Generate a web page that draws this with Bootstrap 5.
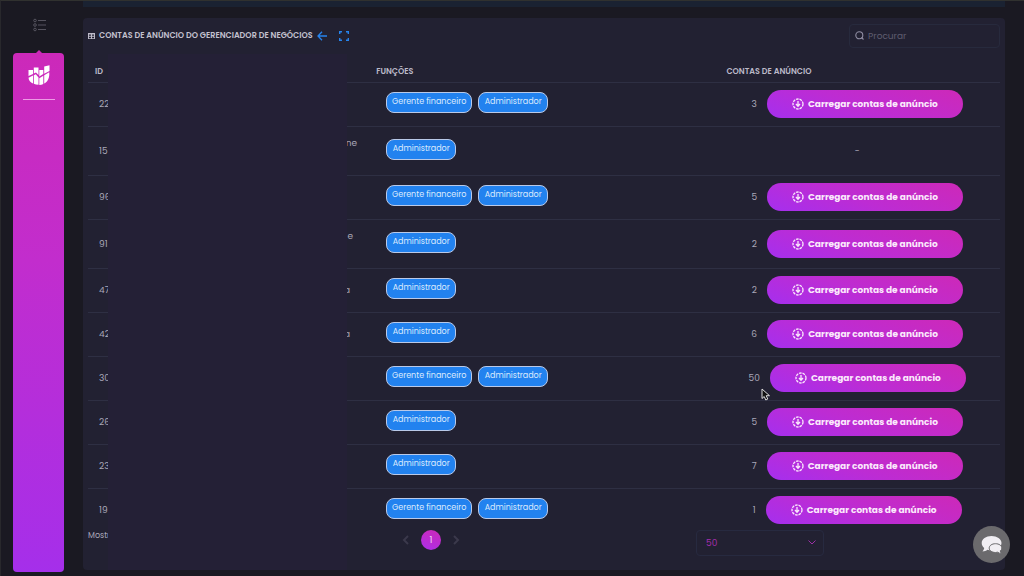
<!DOCTYPE html>
<html lang="pt-BR">
<head>
<meta charset="utf-8">
<meta name="viewport" content="width=device-width, initial-scale=1">
<title>Contas de anúncio</title>
<link href="https://cdn.jsdelivr.net/npm/bootstrap@5.3.0/dist/css/bootstrap.min.css" rel="stylesheet">
<style>
body{background:#1a1922;color:#aaa7b8;font-family:Poppins,Inter,"Open Sans",sans-serif;font-size:9px;line-height:14px;border-top:1px solid #30312f;border-left:1px solid #28282c}
.shell{min-height:calc(100vh - 1px)}
.rail{width:82px;padding:17px 19px 4px 12px}
.rail-toggle{color:#55535e;height:14px;margin-left:20px;line-height:0}
.rail-panel{background:linear-gradient(#cc29b9,#c22dcd 40%,#a52fea);border-radius:4px;margin-top:21px;position:relative}
.rail-panel::before{content:"";position:absolute;top:-3px;left:23px;border:solid transparent;border-width:0 3px 3px;border-bottom-color:#cc29b9}
.rail-line{width:32px;border-top:1px solid #ee9ce5;margin-top:14px}
.top-strip{height:6px;background:#1a2232}
.main-area{padding-right:19px;padding-bottom:6px}
.panel{background:#222132;border-radius:4px;margin-top:11px;padding:5px 5px 0}
.panel-head{height:25px}
.panel-title{font-size:8px;line-height:14px;font-weight:600;color:#c4c2d0}
.tool{color:#2684ee;line-height:0}
.search-box{width:151px;height:24px;border:1px solid #272a3d;border-radius:4px;padding:0 5px}
.search-box input{font-size:9px;color:#b4b1c2;min-width:0;outline:0}
.search-box input::placeholder{color:#5f5d70;opacity:1}
.accounts{table-layout:fixed;width:100%;margin-top:12px}
.accounts th{height:22px;padding:2px 0 0;font-size:8px;font-weight:600;color:#bcbac9;white-space:nowrap;vertical-align:middle}
.accounts td{height:44px;padding:0;vertical-align:middle}
.accounts tbody tr{border-top:1px solid #2e2f43}
.accounts .tall td{height:49px}
.accounts .c-id{padding-left:11px;white-space:nowrap}
.accounts th.c-id{padding-left:7px}
.accounts .c-name{padding-right:16px;text-align:right}
.accounts .tall .c-name{vertical-align:top;padding:9px 9px 0 0}
.accounts td.c-role{padding:0 0 3px 20px}
.accounts td.c-acc{padding-right:2px}
.accounts th.c-role,.accounts th.c-acc{padding-left:10px}
.load-group{gap:10px}
.role{display:inline-block;width:70px;height:21px;line-height:18px;border:1px solid #b9c9e8;border-radius:8px;background:#2282ef;color:#dceafd;font-size:8px;text-align:center;white-space:nowrap;margin-right:6px}
.role-wide{width:86px}
.load-btn{width:196px;height:28px;border:0;border-radius:14px;background:linear-gradient(20deg,#a52fee,#bd2cd3 45%,#cd29b8);color:#fbe9fc;font-size:9px;font-weight:700;padding:0;white-space:nowrap}
.cover{position:absolute;top:36px;bottom:0;left:25px;width:239px;background:#242036}
.panel-foot{height:40px;margin-top:-3px}
.shown{width:34.3%;font-size:8px}
.pager{height:22px;gap:10px}
.page-now{width:20px;height:20px;border:0;padding:0;border-radius:50%;background:linear-gradient(20deg,#ab2fea,#cd29b8);color:#f2d9f5;font-size:9px}
.page-step{border:0;background:none;padding:0;color:#3b394b;line-height:0}
.size-box{width:128px;height:26px;margin-top:1px;margin-right:176px;position:relative}
.size-box select{appearance:none;width:100%;height:100%;border:1px solid #272a40;border-radius:4px;background:transparent;color:#a52eae;font-size:9px;padding:0 9px}
.size-box svg{position:absolute;right:8px;top:9px;pointer-events:none}
.chat{position:fixed;right:14px;bottom:13px;width:37px;height:37px;border:0;border-radius:50%;background:#6b6a6d;padding:0;line-height:0}
.pointer{position:absolute;left:678px;top:370px}
</style>
</head>
<body>
<svg width="0" height="0" class="position-absolute" aria-hidden="true">
<symbol id="load" viewBox="0 0 12 12"><circle cx="6" cy="6" r="5" fill="none" stroke="currentColor" stroke-width="1.3" stroke-dasharray="2.6 .9"/><path d="M6 3v5M4 6l2 2.300L8 6" fill="none" stroke="currentColor" stroke-width="1.3"/></symbol>
</svg>
<div class="shell d-flex">
<aside class="rail d-flex flex-column flex-shrink-0">
<a href="#" class="rail-toggle" aria-label="Menu"><svg width="14" height="14" viewBox="0 0 14 14" fill="none" stroke="currentColor"><circle cx="2" cy="2.500" r="1.3"/><circle cx="2" cy="7" r="1.3"/><circle cx="2" cy="11.500" r="1.3"/><path d="M5 2.500h8M5 7h8M5 11.500h8"/></svg></a>
<nav class="rail-panel flex-grow-1 d-flex flex-column align-items-center pt-2">
<svg class="mt-1" width="22" height="20" viewBox="0 0 22 20"><path fill="#fff" d="M.5 5h4.500v4L.5 11zM5.800 2.500h4.700V10L8 7.500l-2.200 1zM11.300 5h4v4l-4 2.500zM16.200 1.500L21.500.3V6l-5.300 2.700zM.5 12.800L5 10.500v8C2.300 17.500.8 15.500.5 12.800zM5.800 10.200l2-.9 2.700 3.300v7.200c-1.800 0-3.300-.3-4.700-1zM11.300 13.300l4-2.600v8.200c-1.200.6-2.500.9-4 1zM16.200 10.200l5-3c.6 5-1.200 9.300-5 11.300z"/></svg>
<div class="rail-line"></div>
</nav>
</aside>
<div class="main-area flex-grow-1 d-flex flex-column">
<div class="top-strip"></div>
<main class="panel flex-grow-1 position-relative">
<header class="panel-head d-flex align-items-center">
<svg width="7" height="6" viewBox="0 0 6 6" preserveAspectRatio="none" fill="none" stroke="#bdbac8" stroke-width=".9"><path d="M.4.4h5.200v5.200H.4zM0 1h6M0 3.200h6M3 1v5"/></svg>
<h1 class="panel-title mb-0 ps-1">CONTAS DE ANÚNCIO DO GERENCIADOR DE NEGÓCIOS</h1>
<a href="#" class="tool ms-1" aria-label="Voltar"><svg width="10" height="10" viewBox="0 0 10 10" fill="none" stroke="currentColor" stroke-width="1.3"><path d="M10 5H1M5 .8L1 5l4 4.200"/></svg></a>
<a href="#" class="tool ms-2 ps-1" aria-label="Tela cheia"><svg width="10" height="10" viewBox="0 0 10 10" fill="none" stroke="currentColor" stroke-width="1.4"><path d="M.7 3V.7H3M7 .7h2.300V3M9.300 7v2.300H7M3 9.300H.7V7"/></svg></a>
<label class="search-box d-flex align-items-center ms-auto"><svg class="flex-shrink-0" width="9" height="9" viewBox="0 0 9 9" fill="none" stroke="#918ea3" stroke-width="1.1"><circle cx="4.300" cy="4.300" r="3.500"/><path d="M6.500 6.500l2 2"/></svg><input type="search" class="border-0 bg-transparent p-0 ms-1 flex-grow-1" placeholder="Procurar" aria-label="Procurar"></label>
</header>
<table class="accounts">
<colgroup><col style="width:2.2%"><col style="width:28.3%"><col style="width:38.4%"><col style="width:31.1%"></colgroup>
<thead><tr><th class="c-id">ID</th><th></th><th class="c-role">FUNÇÕES</th><th class="c-acc">CONTAS DE ANÚNCIO</th></tr></thead>
<tbody id="rows"></tbody>
</table>
<footer class="panel-foot d-flex align-items-start">
<div class="shown">Mostrando</div>
<div class="pager d-flex align-items-center"><button class="page-step" aria-label="Anterior"><svg width="10" height="10" viewBox="0 0 10 10" fill="none" stroke="currentColor" stroke-width="2"><path d="M7 1L3 5l4 4"/></svg></button><button class="page-now">1</button><button class="page-step" aria-label="Próxima"><svg width="10" height="10" viewBox="0 0 10 10" fill="none" stroke="currentColor" stroke-width="2"><path d="M3 1l4 4-4 4"/></svg></button></div>
<div class="size-box ms-auto"><select aria-label="Itens por página"><option>50</option></select><svg width="8" height="7" viewBox="0 0 8 7" fill="none" stroke="#9c2fa8"><path d="M.5 1.500L4 5l3.500-3.500"/></svg></div>
</footer>
<div class="cover"></div>
<svg class="pointer" width="10" height="13" viewBox="0 0 10 13"><path d="M1 1v9.500l2.200-2L4.800 12l2-1-1.600-3.300h3.300z" fill="#111" stroke="#ddd"/></svg>
</main>
</div>
</div>
<button class="chat" aria-label="Chat"><svg width="22" height="20" viewBox="0 0 22 20"><path fill="#f1eef3" d="M10.500 1C5 1 .7 4 .7 8c0 2 1 3.700 2.500 5-.2 1.500-1 2.800-1.700 3.500 2 0 3.700-.7 5-1.700 1.200.4 2.600.5 4 .5 5.500 0 10-3.200 10-7.300S16 1 10.500 1z"/><path fill="#f1eef3" stroke="#6b6a6d" d="M14.500 8.700c-3.600 0-6.300 1.900-6.300 4.400s2.700 4.400 6.300 4.400c.8 0 1.500-.1 2.200-.3 1 .8 2.200 1.300 3.800 1.300-.7-.7-1.100-1.500-1.200-2.600 1-.8 1.500-1.700 1.500-2.800 0-2.500-2.700-4.400-6.300-4.400z"/></svg></button>
<script src="https://cdn.jsdelivr.net/npm/bootstrap@5.3.0/dist/js/bootstrap.bundle.min.js"></script>
<script>
const accounts = [
  ['22', '', true, '3'], ['15', 'ne', false, ''], ['96', '', true, '5'],
  ['91', 'e', false, '2'], ['47', 'a', false, '2'], ['42', 'a', false, '6'],
  ['30', '', true, '50'], ['26', '', false, '5'], ['23', '', false, '7'], ['19', '', true, '1']
];
document.getElementById('rows').innerHTML = accounts.map(([id, name, finance, count], i) => `
<tr class="${i === 1 || i === 3 ? 'tall' : ''}">
<td class="c-id">${id}</td><td class="c-name"><span class="${name === 'e' ? 'pe-1' : ''}">${name}</span></td>
<td class="c-role">${finance ? '<span class="role role-wide">Gerente financeiro</span>' : ''}<span class="role">Administrador</span></td>
<td class="c-acc">${count ? `<div class="load-group d-flex justify-content-center align-items-center"><span>${count}</span><button class="load-btn d-flex justify-content-center align-items-center gap-1"><svg width="12" height="12"><use href="#load"/></svg>Carregar contas de anúncio</button></div>` : '<div class="text-center">-</div>'}</td>
</tr>`).join('');
</script>
</body>
</html>
